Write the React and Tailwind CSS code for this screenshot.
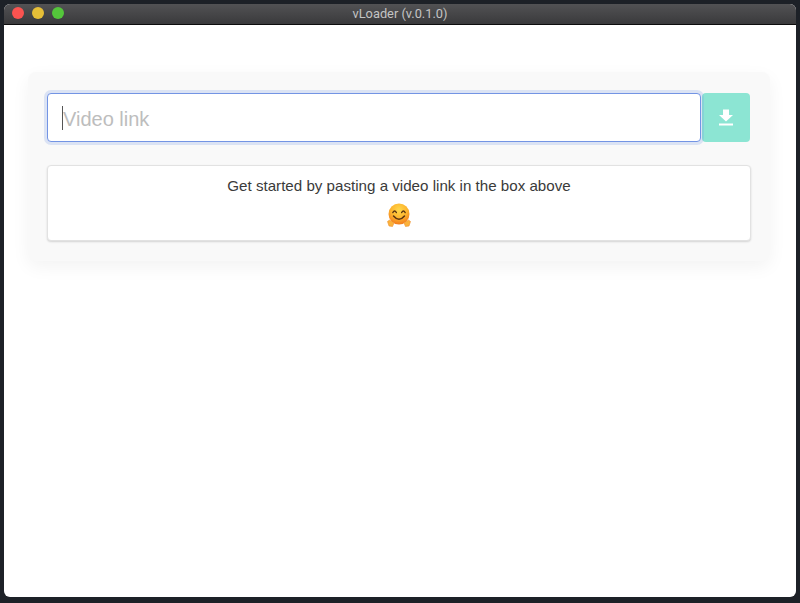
import React from "react";

const HugEmoji = () => (
  <svg width="26" height="26" viewBox="0 0 26 26" className="block">
    <defs>
      <radialGradient id="face" cx="50%" cy="30%" r="70%">
        <stop offset="0%" stopColor="#ffd84a" />
        <stop offset="55%" stopColor="#fdb52f" />
        <stop offset="100%" stopColor="#f27a1c" />
      </radialGradient>
    </defs>
    <circle cx="13" cy="11" r="10.5" fill="url(#face)" />
    <path d="M6.8 9.6 Q8.6 6.4 10.4 9.6" fill="none" stroke="#5a3412" strokeWidth="1.3" strokeLinecap="round" />
    <path d="M15.6 9.6 Q17.4 6.4 19.2 9.6" fill="none" stroke="#5a3412" strokeWidth="1.3" strokeLinecap="round" />
    <path d="M7.5 13 Q13 19.5 18.5 13" fill="none" stroke="#5a3412" strokeWidth="1.5" strokeLinecap="round" />
    <path d="M1.5 18.5 L3.5 17 L8 20 L6.5 23.5 L3 23 Z" fill="#fbb23a" stroke="#ec9130" strokeWidth="0.6" strokeLinejoin="round" />
    <path d="M24.5 18.5 L22.5 17 L18 20 L19.5 23.5 L23 23 Z" fill="#fbb23a" stroke="#ec9130" strokeWidth="0.6" strokeLinejoin="round" />
  </svg>
);

const DownloadIcon = () => (
  <svg width="16" height="17" viewBox="0 0 16 17" fill="white" className="block">
    <path d="M5 0.5 H11 V6 H15 L8 12.5 L1 6 H5 Z" />
    <rect x="1" y="14.5" width="14" height="2" />
  </svg>
);

export default function App() {
  return (
    <div className="h-[603px] w-[800px] bg-[#1d2127] pt-[4px] px-[4px] pb-[6px] overflow-hidden font-['Liberation_Sans',sans-serif]">
      <div className="h-full flex flex-col rounded-[6px] overflow-hidden bg-white">
        <div className="relative h-[21px] shrink-0 flex items-center justify-center bg-gradient-to-b from-[#525254] to-[#3a3a3c] border-b border-[#0d0d0d]">
          <div className="absolute left-[8px] top-[3px] flex gap-[8px]">
            <span className="w-[12px] h-[12px] rounded-full bg-[#fb5350]" />
            <span className="w-[12px] h-[12px] rounded-full bg-[#e6bf37]" />
            <span className="w-[12px] h-[12px] rounded-full bg-[#54c63b]" />
          </div>
          <span className="text-[12.8px] leading-none text-[#c4c4c4] font-['Roboto',sans-serif]">vLoader (v.0.1.0)</span>
        </div>
        <div className="flex-1 pt-[47px] px-[24px]">
          <div className="w-[742px] h-[189px] rounded-[8px] bg-[#f9f9f9] shadow-[0_6px_18px_rgba(0,0,0,0.05)] pt-[21px] px-[19px]">
            <div className="flex h-[49px] w-[703px]">
              <div className="relative w-[654px] h-full bg-white rounded-[4px] border border-[#7394e4] shadow-[0_0_0_3px_rgba(115,148,228,0.22)] flex items-center pl-[15px]">
                <span className="absolute left-[14px] top-[12px] w-[1px] h-[24px] bg-[#555]" />
                <span className="text-[20px] text-[#bdbdbd] mt-[2px]">Video link</span>
              </div>
              <div className="ml-[1px] flex-1 rounded-[4px] bg-[#8ce5d3] flex items-center justify-center">
                <DownloadIcon />
              </div>
            </div>
            <div className="mt-[23px] w-[704px] h-[76px] bg-white rounded-[4px] border border-[#e2e2e2] shadow-[0_1px_2px_rgba(0,0,0,0.15)] flex flex-col items-center pt-[10px]">
              <p className="text-[15.15px] leading-[20px] text-[#3a3a3a]">Get started by pasting a video link in the box above</p>
              <div className="mt-[7px]">
                <HugEmoji />
              </div>
            </div>
          </div>
        </div>
      </div>
    </div>
  );
}
